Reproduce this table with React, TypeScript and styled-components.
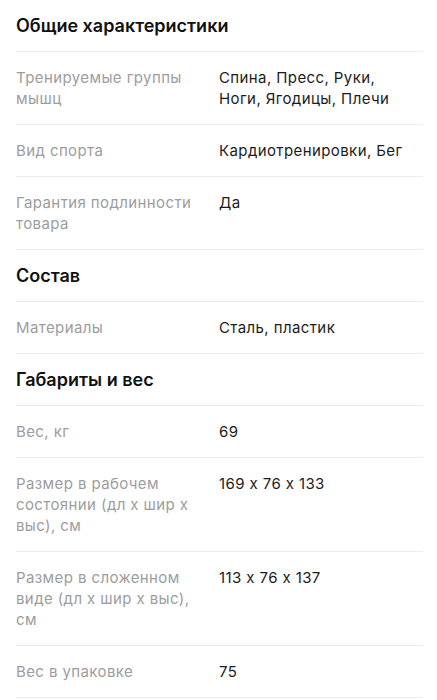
import React from "react";
import styled, { createGlobalStyle } from "styled-components";

const GlobalStyle = createGlobalStyle`
  html, body {
    margin: 0;
    padding: 0;
    background: #ffffff;
  }
  body {
    font-family: Inter, "Noto Sans", "Liberation Sans", sans-serif;
    -webkit-font-smoothing: antialiased;
  }
`;

type Row = { label: string; value: string };
type Section = { title: string; rows: Row[] };

const sections: Section[] = [
  {
    title: "Общие характеристики",
    rows: [
      { label: "Тренируемые группы мышц", value: "Спина, Пресс, Руки, Ноги, Ягодицы, Плечи" },
      { label: "Вид спорта", value: "Кардиотренировки, Бег" },
      { label: "Гарантия подлинности товара", value: "Да" },
    ],
  },
  {
    title: "Состав",
    rows: [{ label: "Материалы", value: "Сталь, пластик" }],
  },
  {
    title: "Габариты и вес",
    rows: [
      { label: "Вес, кг", value: "69" },
      { label: "Размер в рабочем состоянии (дл х шир х выс), см", value: "169 х 76 х 133" },
      { label: "Размер в сложенном виде (дл х шир х выс), см", value: "113 х 76 х 137" },
      { label: "Вес в упаковке", value: "75" },
    ],
  },
];

const Page = styled.div`
  padding: 0 14px 0 16px;
`;

const Heading = styled.h2`
  margin: 0;
  height: 51px;
  display: flex;
  align-items: center;
  font-size: 18px;
  font-weight: 600;
  color: #111111;
  border-bottom: 1px solid #ececec;
`;

const PropRow = styled.div`
  display: grid;
  grid-template-columns: 203px 1fr;
  padding: 15px 0;
  border-bottom: 1px solid #ececec;
  font-size: 15px;
  line-height: 21px;
  letter-spacing: 0.4px;
`;

const Label = styled.div`
  color: #9d9d9d;
  padding-right: 10px;
`;

const Value = styled.div`
  color: #1c1c1c;
  padding-right: 14px;
`;

export default function App() {
  return (
    <>
      <GlobalStyle />
      <Page>
        {sections.map((s) => (
          <section key={s.title}>
            <Heading>{s.title}</Heading>
            {s.rows.map((r) => (
              <PropRow key={r.label}>
                <Label>{r.label}</Label>
                <Value>{r.value}</Value>
              </PropRow>
            ))}
          </section>
        ))}
      </Page>
    </>
  );
}
